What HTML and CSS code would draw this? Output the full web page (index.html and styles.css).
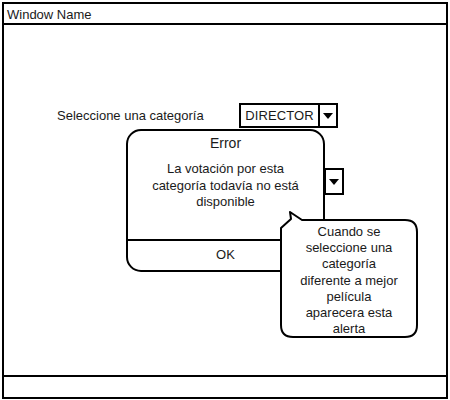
FILE: index.html
```html
<!DOCTYPE html>
<html lang="es">
<head>
<meta charset="utf-8">
<title>Mockup</title>
<link rel="stylesheet" href="styles.css">
</head>
<body>
<div class="window">
  <div class="titlebar">Window Name</div>
  <div class="content">
    <div class="row row-first">
      <span class="label">Seleccione una categoría</span>
      <div class="select">
        <span class="value">DIRECTOR</span>
        <span class="arrow"><svg width="10" height="6" viewBox="0 0 10 6"><path d="M0 0 L10 0 L5 6 Z" fill="#000"/></svg></span>
      </div>
    </div>
    <div class="row row-second">
      <div class="select select-wide">
        <span class="value"></span>
        <span class="arrow"><svg width="10" height="6" viewBox="0 0 10 6"><path d="M0 0 L10 0 L5 6 Z" fill="#000"/></svg></span>
      </div>
    </div>

    <div class="dialog">
      <div class="dialog-title">Error</div>
      <div class="dialog-body">La votación por esta<br>categoría todavía no está<br>disponible</div>
      <div class="dialog-footer">OK</div>
    </div>

    <div class="callout">
      <svg class="callout-shape" width="142" height="132" viewBox="0 0 142 132">
        <path d="M24 12 L127 12 Q139 12 139 24 L139 117 Q139 129 127 129 L15 129 Q3 129 3 117 L3 20 L13 11 L12 4 Z" fill="#fff" stroke="#000" stroke-width="2" stroke-linejoin="round"/>
      </svg>
      <p class="callout-text">Cuando se<br>seleccione una<br>categoría<br>diferente a mejor<br>película<br>aparecera esta<br>alerta</p>
    </div>
  </div>
  <div class="footer"></div>
</div>
</body>
</html>
```

FILE: styles.css
```css
html, body {
  margin: 0;
  padding: 0;
  background: #fff;
}

body {
  font-family: "Liberation Sans", Arial, sans-serif;
  font-size: 13px;
  color: #1a1a1a;
}

.window {
  margin: 2px 0 0 2px;
  width: 446px;
  height: 397px;
  box-sizing: border-box;
  border: 2px solid #000;
  display: flex;
  flex-direction: column;
  background: #fff;
}

.titlebar {
  height: 21px;
  box-sizing: border-box;
  border-bottom: 2px solid #000;
  padding: 3px 0 0 3px;
  line-height: 15px;
  font-size: 13px;
}

.content {
  flex: 1;
  position: relative;
}

.row {
  display: flex;
  align-items: center;
}

.row-first {
  padding: 78px 0 0 53px;
}

.row-second {
  padding: 40px 0 0 235px;
}

.label {
  width: 182px;
  line-height: 16px;
}

.select {
  display: flex;
  height: 25px;
  box-sizing: border-box;
  border: 2px solid #000;
  background: #fff;
}

.select .value {
  width: 77px;
  text-align: center;
  line-height: 21px;
  letter-spacing: 0.1px;
}

.select .arrow {
  width: 16px;
  border-left: 2px solid #000;
  display: flex;
  align-items: center;
  justify-content: center;
}

.select-wide {
  height: 27px;
}

.select-wide .value {
  width: 83px;
}

.dialog {
  position: absolute;
  left: 122px;
  top: 104px;
  width: 199px;
  height: 143px;
  box-sizing: border-box;
  border: 2px solid #000;
  border-radius: 15px;
  background: #fff;
  display: flex;
  flex-direction: column;
  text-align: center;
}

.dialog-title {
  padding-top: 4px;
  line-height: 16px;
  font-size: 14px;
}

.dialog-body {
  padding-top: 10px;
  line-height: 16.5px;
  flex: 1;
}

.dialog-footer {
  height: 31px;
  box-sizing: border-box;
  border-top: 2px solid #000;
  line-height: 27px;
}

.callout {
  position: absolute;
  left: 274px;
  top: 183px;
  width: 142px;
  height: 132px;
}

.callout-shape {
  position: absolute;
  left: 0;
  top: 0;
  display: block;
}

.callout-text {
  position: relative;
  margin: 0;
  padding-top: 16px;
  padding-left: 3px;
  width: 136px;
  text-align: center;
  line-height: 16.2px;
}

.footer {
  height: 22px;
  box-sizing: border-box;
  border-top: 2px solid #000;
}
```
